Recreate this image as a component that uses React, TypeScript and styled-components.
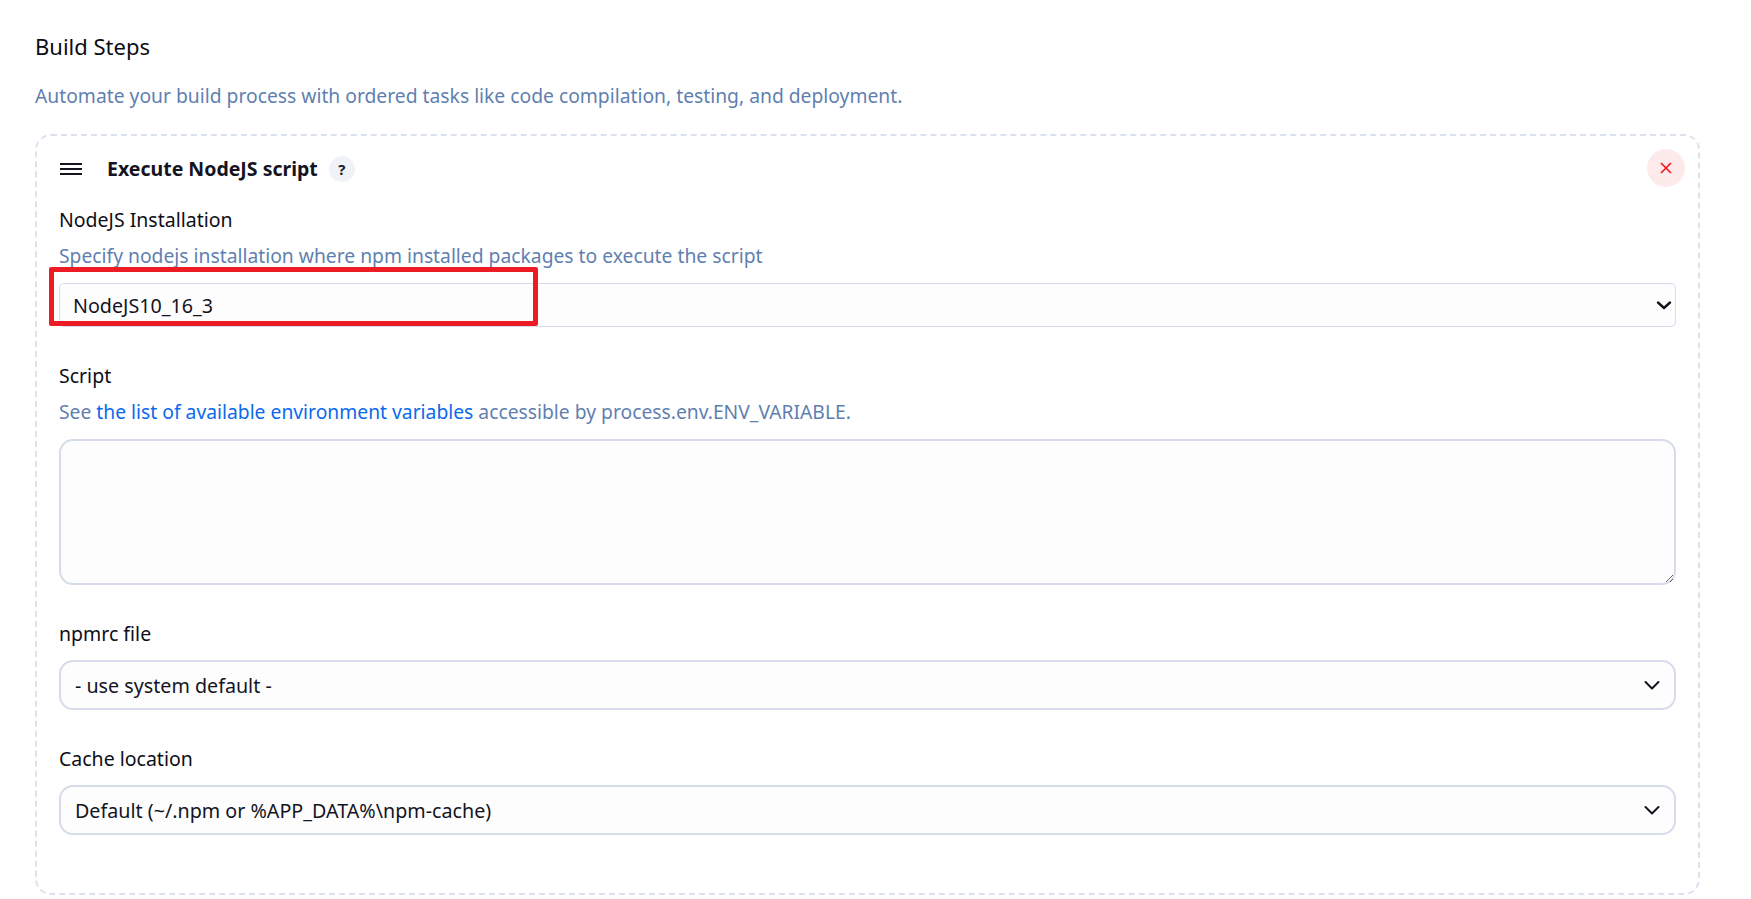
import React from "react";
import styled, { createGlobalStyle } from "styled-components";

const Global = createGlobalStyle`
  html, body { margin: 0; padding: 0; background: #fff; }
  body { font-family: "Noto Sans", "Open Sans", "Noto Sans CJK SC", sans-serif; color: #14141f; }
  * { box-sizing: border-box; }
`;

const Page = styled.main`
  width: 1751px;
  height: 899px;
  padding: 29px 51px 5px 35px;
  overflow: hidden;
`;
const Heading = styled.h2`
  margin: 0;
  height: 34px;
  font-size: 22px;
  line-height: 34px;
  font-weight: 400;
  color: #0c0c14;
`;
const Lead = styled.p`
  margin: 17px 0 0;
  height: 32px;
  font-size: 19.3px;
  line-height: 32px;
  color: #5f7fb0;
`;
const Card = styled.section`
  position: relative;
  margin-top: 22px;
  height: 761px;
  border: 2px dashed #dbe2ee;
  border-radius: 16px;
  padding: 0 22px;
`;
const CardHeader = styled.div`
  display: flex;
  align-items: center;
  height: 66px;
`;
const Grip = styled.svg`
  width: 22px;
  height: 14px;
  margin-left: 1px;
  color: #14141f;
`;
const Title = styled.h3`
  margin: 0 0 0 25px;
  font-size: 19.5px;
  line-height: 28px;
  font-weight: 700;
  color: #14141f;
`;
const Help = styled.span`
  display: flex;
  align-items: center;
  justify-content: center;
  width: 26px;
  height: 26px;
  margin-left: 11px;
  border-radius: 50%;
  background: #eff3f8;
  font-size: 15px;
  font-weight: 700;
  color: #1c1c2a;
`;
const Close = styled.button`
  position: absolute;
  top: 13px;
  right: 13px;
  display: flex;
  align-items: center;
  justify-content: center;
  width: 38px;
  height: 38px;
  padding: 0;
  border: 0;
  border-radius: 50%;
  background: #fdebeb;
  color: #f5101c;
`;
const Field = styled.div<{ $mt?: number }>`
  margin-top: ${(p) => p.$mt ?? 0}px;
`;
const Label = styled.label`
  display: block;
  height: 36px;
  font-size: 19.5px;
  line-height: 36px;
  color: #0e0e16;
`;
const Desc = styled.div`
  height: 36px;
  font-size: 19.3px;
  line-height: 36px;
  color: #5f7fb0;
`;
const Link = styled.a`
  color: #0b69ec;
  text-decoration: none;
`;
const SelectWrap = styled.div<{ $compact?: boolean }>`
  position: relative;
  margin-top: ${(p) => (p.$compact ? 9 : 8)}px;
`;
const Select = styled.select<{ $compact?: boolean }>`
  display: block;
  width: 100%;
  height: ${(p) => (p.$compact ? 44 : 50)}px;
  padding: 0 0 0 ${(p) => (p.$compact ? 13 : 14)}px;
  appearance: none;
  border: ${(p) => (p.$compact ? "1px" : "2px")} solid #d6dcea;
  border-radius: ${(p) => (p.$compact ? 5 : 14)}px;
  background: #fdfdfe;
  font-family: inherit;
  font-size: 19.7px;
  color: #14141f;
`;
const Chevron = styled.svg<{ $compact?: boolean }>`
  position: absolute;
  right: ${(p) => (p.$compact ? 4 : 16)}px;
  top: ${(p) => (p.$compact ? 14 : 17)}px;
  width: 16px;
  height: 16px;
  color: #14141f;
  pointer-events: none;
`;
const ScriptBox = styled.textarea`
  display: block;
  width: 100%;
  height: 146px;
  margin-top: 9px;
  border: 2px solid #d6dcea;
  border-radius: 14px;
  background: #fdfdfe;
  resize: vertical;
`;
const Highlight = styled.div`
  position: absolute;
  left: 12px;
  top: 131px;
  width: 489px;
  height: 59px;
  border: 5px solid #ed1c24;
  border-radius: 2px;
  pointer-events: none;
`;

const ChevronIcon = ({ compact }: { compact?: boolean }) => (
  <Chevron $compact={compact} viewBox="0 0 16 16" fill="none" stroke="currentColor" strokeWidth={compact ? 2.4 : 2} strokeLinecap="round" strokeLinejoin="round">
    {compact ? <path d="M2 5.500 8 11l6-5.500" /> : <path d="M1.500 5 8 11.500 14.500 5" />}
  </Chevron>
);

export default function App() {
  return (
    <>
      <Global />
      <Page>
        <Heading>Build Steps</Heading>
        <Lead>Automate your build process with ordered tasks like code compilation, testing, and deployment.</Lead>
        <Card>
          <CardHeader>
            <Grip viewBox="0 0 22 14" fill="none" stroke="currentColor" strokeWidth="2">
              <path d="M0 2h22M0 7h22M0 12h22" />
            </Grip>
            <Title>Execute NodeJS script</Title>
            <Help>?</Help>
          </CardHeader>
          <Close aria-label="Delete">
            <svg width="14" height="14" viewBox="0 0 14 14" fill="none" stroke="currentColor" strokeWidth="1.6">
              <path d="M2 2l10 10M12 2 2 12" />
            </svg>
          </Close>
          <Field>
            <Label>NodeJS Installation</Label>
            <Desc>Specify nodejs installation where npm installed packages to execute the script</Desc>
            <SelectWrap $compact>
              <Select $compact defaultValue="a"><option value="a">NodeJS10_16_3</option></Select>
              <ChevronIcon compact />
            </SelectWrap>
          </Field>
          <Field $mt={31}>
            <Label>Script</Label>
            <Desc>See <Link href="#">the list of available environment variables</Link> accessible by process.env.ENV_VARIABLE.</Desc>
            <ScriptBox />
          </Field>
          <Field $mt={31}>
            <Label>npmrc file</Label>
            <SelectWrap>
              <Select defaultValue="a"><option value="a">- use system default -</option></Select>
              <ChevronIcon />
            </SelectWrap>
          </Field>
          <Field $mt={31}>
            <Label>Cache location</Label>
            <SelectWrap>
              <Select defaultValue="a"><option value="a">Default (~/.npm or %APP_DATA%\npm-cache)</option></Select>
              <ChevronIcon />
            </SelectWrap>
          </Field>
          <Highlight />
        </Card>
      </Page>
    </>
  );
}
